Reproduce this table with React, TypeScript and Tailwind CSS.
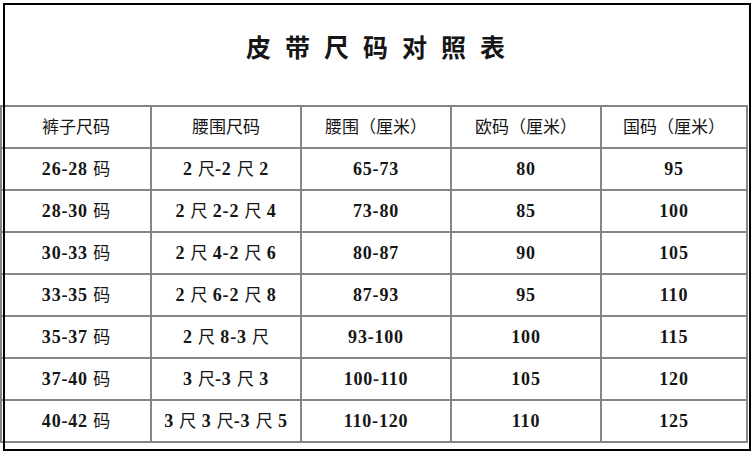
import type { ReactNode } from "react"

const header = ["裤子尺码", "腰围尺码", "腰围（厘米）", "欧码（厘米）", "国码（厘米）"]

const rows = [
  ["26-28 码", "2 尺-2 尺 2", "65-73", "80", "95"],
  ["28-30 码", "2 尺 2-2 尺 4", "73-80", "85", "100"],
  ["30-33 码", "2 尺 4-2 尺 6", "80-87", "90", "105"],
  ["33-35 码", "2 尺 6-2 尺 8", "87-93", "95", "110"],
  ["35-37 码", "2 尺 8-3 尺", "93-100", "100", "115"],
  ["37-40 码", "3 尺-3 尺 3", "100-110", "105", "120"],
  ["40-42 码", "3 尺 3 尺-3 尺 5", "110-120", "110", "125"],
]

// digits in bold serif, chinese in regular cjk
function Mixed({ text }: { text: string }) {
  const parts = text.match(/[\x00-\x7f]+|[^\x00-\x7f]+/g) ?? []
  return (
    <>
      {parts.map((p, i) =>
        /^[\x00-\x7f]+$/.test(p) ? (
          <span key={i} className="text-[18px] font-bold tracking-[0.8px]">
            {p}
          </span>
        ) : (
          <span key={i} className="text-[17px] font-normal">
            {p}
          </span>
        )
      )}
    </>
  )
}

function Row({ cells }: { cells: string[] }) {
  return (
    <div className="flex h-[42px] border-b-2 border-[#858585]">
      {cells.map((c, i) => (
        <div
          key={i}
          className={`flex items-center justify-center border-r-2 border-[#858585] ${
            i === 4 ? "w-[146px]" : "w-[150px]"
          }`}
        >
          <Cell>
            <Mixed text={c} />
          </Cell>
        </div>
      ))}
    </div>
  )
}

function Cell({ children }: { children: ReactNode }) {
  return <span className="whitespace-pre leading-none">{children}</span>
}

export default function App() {
  return (
    <div
      className="relative h-[451px] w-[751px] overflow-hidden bg-white text-[#161616]"
      style={{ fontFamily: '"Liberation Serif", "Noto Sans CJK SC", serif' }}
    >
      <div className="flex h-[105px] justify-center pt-[34px]">
        <h1
          className="pl-[14px] text-[25px] font-bold leading-[25px] tracking-[14px]"
          style={{ fontFamily: '"Noto Sans CJK SC", sans-serif' }}
        >
          皮带尺码对照表
        </h1>
      </div>

      <div className="w-[748px] border-l-2 border-t-2 border-[#858585]">
        <Row cells={header} />
        {rows.map((r, i) => (
          <Row key={i} cells={r} />
        ))}
      </div>

      {/* black frame around the sheet */}
      <div className="pointer-events-none absolute bottom-0 left-[3px] right-0 top-[3px] border-2 border-black" />
    </div>
  )
}
